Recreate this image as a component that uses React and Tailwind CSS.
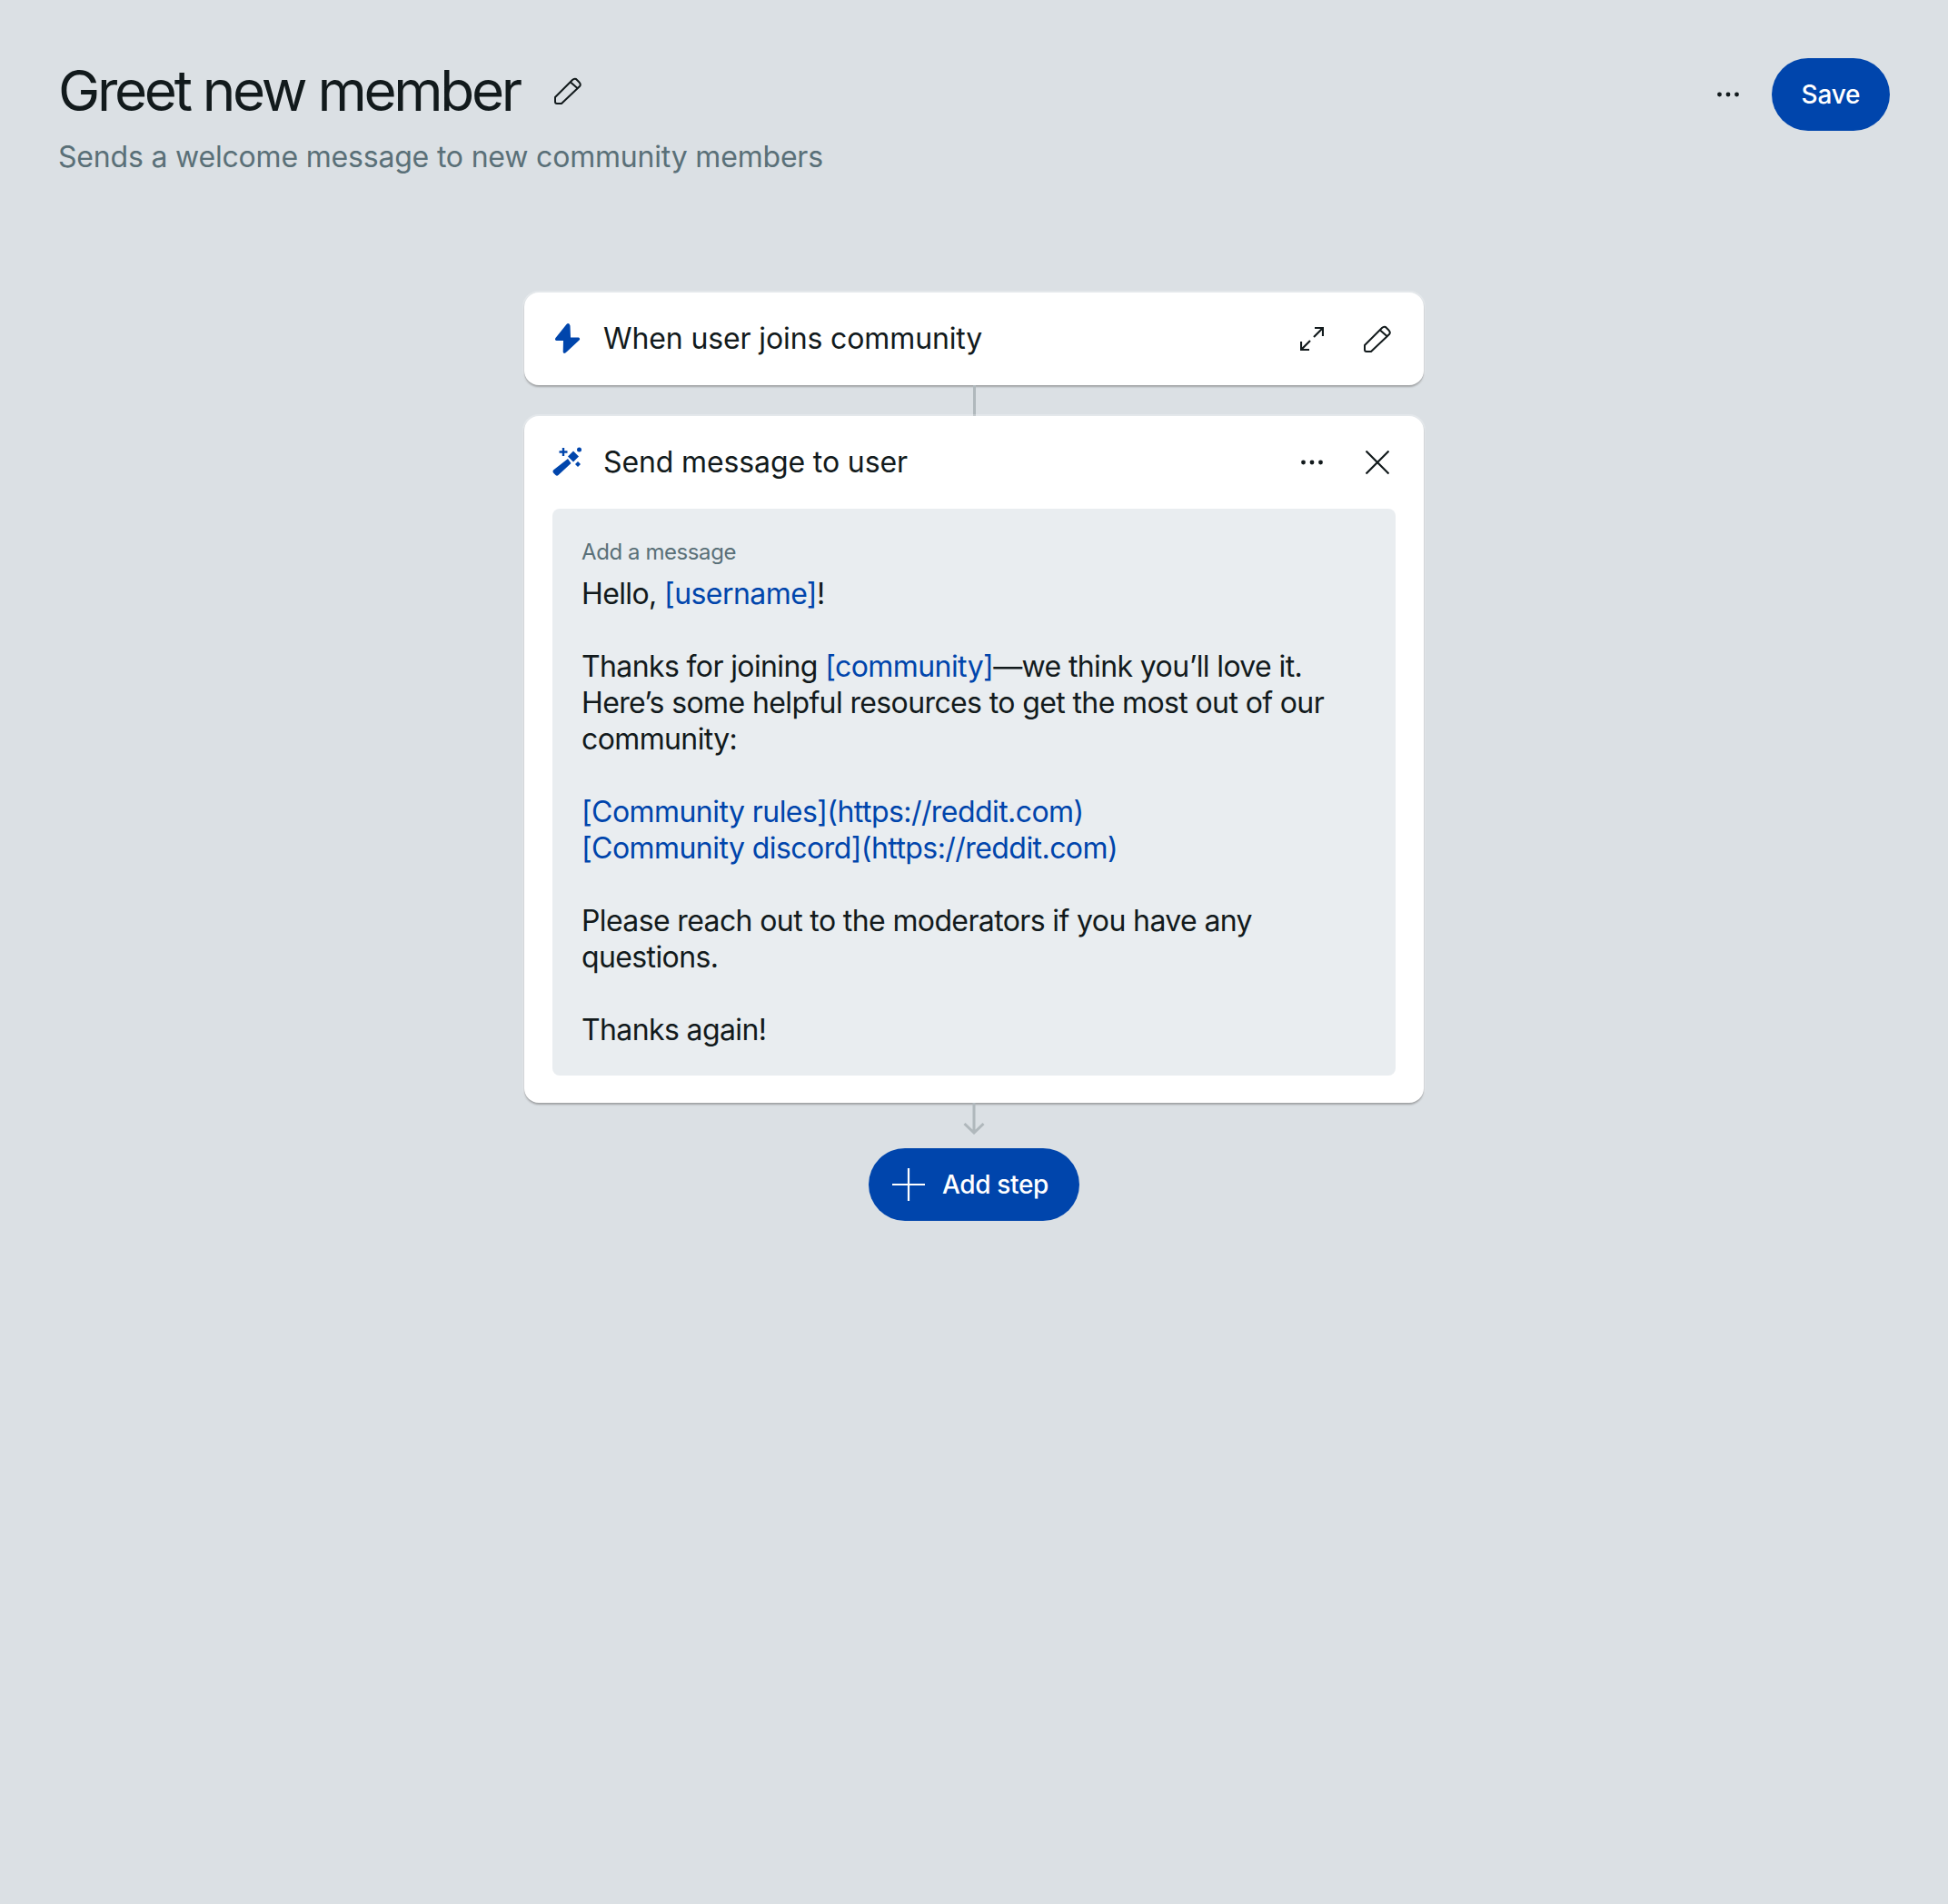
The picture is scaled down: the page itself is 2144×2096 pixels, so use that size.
function PencilIcon({ className }) {
  return (
    <svg viewBox="5 5 32 32" fill="none" stroke="currentColor" strokeWidth="2" strokeLinejoin="round" className={className}>
      <path d="M7 28 26 9q2-2 4-1l3 3q3 3 1 5L14 35H9q-2 0-2-2z" />
      <path d="m24 11.500 8 7" />
    </svg>
  );
}

function DotsIcon({ className }) {
  return (
    <svg viewBox="0 0 24 8" fill="currentColor" className={className}>
      <circle cx="2.500" cy="4" r="2.400" />
      <circle cx="12" cy="4" r="2.400" />
      <circle cx="21.500" cy="4" r="2.400" />
    </svg>
  );
}

function ExpandIcon({ className }) {
  return (
    <svg viewBox="0 0 26 26" fill="none" stroke="currentColor" strokeWidth="2.200" className={className}>
      <path d="M15 11 25 1M16 1h9v9" />
      <path d="M11 15 1 25M10 25H1v-9" />
    </svg>
  );
}

function CloseIcon({ className }) {
  return (
    <svg viewBox="0 0 26 26" fill="none" stroke="currentColor" strokeWidth="2.200" className={className}>
      <path d="m0.500 0.500 25 25M25.500 0.500l-25 25" />
    </svg>
  );
}

function BoltIcon({ className }) {
  return (
    <svg viewBox="5 4 40 36" fill="currentColor" className={className}>
      <path d="M23.500 6 11.500 21q-1.500 2.500 1 3H20l-.3 12.500q.5 2.500 3 .8L37.500 23.500q1.500-2 -.5-3H28L27.500 7.500q-1.500-4-4-1.500z" />
    </svg>
  );
}

function WandIcon({ className }) {
  return (
    <svg viewBox="5 4 40 36" fill="currentColor" className={className}>
      <path d="M25 18 28.500 23 14.500 36q-1.500 1.500-3 0L9 33.500q-1-1.500 0-3z" />
      <path d="M31 9.500 37 15.500 31 21.500 25 15.500z" />
      <path d="M18.800 6h2.400v3.300h3.300v2.400h-3.300V15h-2.400v-3.300h-3.300V9.300h3.300z" />
      <circle cx="37.500" cy="8" r="2.500" />
      <path d="m36 21 3 3-3 3-3-3z" />
    </svg>
  );
}

function PlusIcon({ className }) {
  return (
    <svg viewBox="0 0 36 36" fill="none" stroke="currentColor" strokeWidth="2.200" className={className}>
      <path d="M18 0v36M0 18h36" />
    </svg>
  );
}

function Token({ children }) {
  return <span className="text-[#0045ac] tracking-[-0.56px]">{children}</span>;
}

function CardHeader({ icon, title, actions }) {
  return (
    <div className="flex items-center h-[102px] pl-[28px] pr-[35px]">
      <div className="w-10 h-9 text-[#0045ac]">{icon}</div>
      <span className="ml-[19px] text-[32px] leading-10 tracking-[-0.12px] text-[#121a1c]">{title}</span>
      <div className="ml-auto flex items-center gap-10 text-[#121a1c]">{actions}</div>
    </div>
  );
}

export default function App() {
  return (
    <div className="min-h-[2096px] bg-[#dbe0e4] px-16 pt-16 font-['Inter',sans-serif]">
      {/* Page header */}
      <div className="flex justify-between items-start">
        <div>
          <div className="flex items-center h-[72px]">
            <h1 className="text-[62px] leading-[72px] tracking-[-3.3px] text-[#121a1c]">Greet new member</h1>
            <PencilIcon className="ml-[37px] w-8 h-8 text-[#121a1c]" />
          </div>
          <p className="mt-[17px] text-[32px] leading-10 tracking-[-0.19px] text-[#5a7078]">
            Sends a welcome message to new community members
          </p>
        </div>
        <div className="flex items-center">
          <DotsIcon className="w-6 h-2 text-[#121a1c]" />
          <button className="ml-9 h-20 w-[130px] rounded-full bg-[#0045ac] text-white text-[28px] font-[550] tracking-[-0.2px]">Save</button>
        </div>
      </div>

      {/* Flow */}
      <div className="mt-[129px] flex flex-col items-center">
        <div className="w-[990px] rounded-[16px] bg-white shadow-[0_2px_2px_rgba(0,0,0,0.3),0_0_0_2px_rgba(255,255,255,0.25)]">
          <CardHeader
            icon={<BoltIcon className="w-10 h-9" />}
            title="When user joins community"
            actions={<>
              <div className="w-8 flex justify-center"><ExpandIcon className="w-[26px] h-[26px]" /></div>
              <PencilIcon className="w-8 h-8" />
            </>}
          />
        </div>
        <div className="w-[3px] h-[34px] bg-[#b0b8bc]" />
        <div className="w-[990px] rounded-[16px] bg-white pb-[30px] shadow-[0_2px_2px_rgba(0,0,0,0.3),0_0_0_2px_rgba(255,255,255,0.25)]">
          <CardHeader
            icon={<WandIcon className="w-10 h-9" />}
            title="Send message to user"
            actions={<>
              <div className="w-8 flex justify-center"><DotsIcon className="w-6 h-2" /></div>
              <div className="w-8 flex justify-center"><CloseIcon className="w-[26px] h-[26px]" /></div>
            </>}
          />
          <div className="mx-[31px] rounded-[8px] bg-[#e9edf0] px-8 pt-8 pb-[30px]">
            <div className="text-[24px] leading-8 tracking-[-0.42px] text-[#5a7078]">Add a message</div>
            <div className="mt-[10px] text-[32px] leading-10 tracking-[-0.62px] text-[#121a1c]">
              <p>Hello, <Token>[username]</Token>!</p>
              <p className="mt-10">Thanks for joining <Token>[community]</Token>—we think you’ll love it. Here’s some helpful resources to get the most out of our community:</p>
              <p className="mt-10"><Token>[Community rules](https://reddit.com)</Token></p>
              <p><Token>[Community discord](https://reddit.com)</Token></p>
              <p className="mt-10">Please reach out to the moderators if you have any questions.</p>
              <p className="mt-10">Thanks again!</p>
            </div>
          </div>
        </div>
        <svg viewBox="0 0 24 35" fill="none" stroke="#b0b8bc" strokeWidth="3" className="w-6 h-[35px]">
          <path d="M12 0v33M1.500 23 12 33l10.500-10" />
        </svg>
        <button className="mt-[15px] h-20 w-[232px] rounded-full bg-[#0045ac] text-white flex items-center pl-[26px]">
          <PlusIcon className="w-9 h-9" />
          <span className="ml-[19px] text-[28px] font-[550] tracking-[-0.35px]">Add step</span>
        </button>
      </div>
    </div>
  );
}
